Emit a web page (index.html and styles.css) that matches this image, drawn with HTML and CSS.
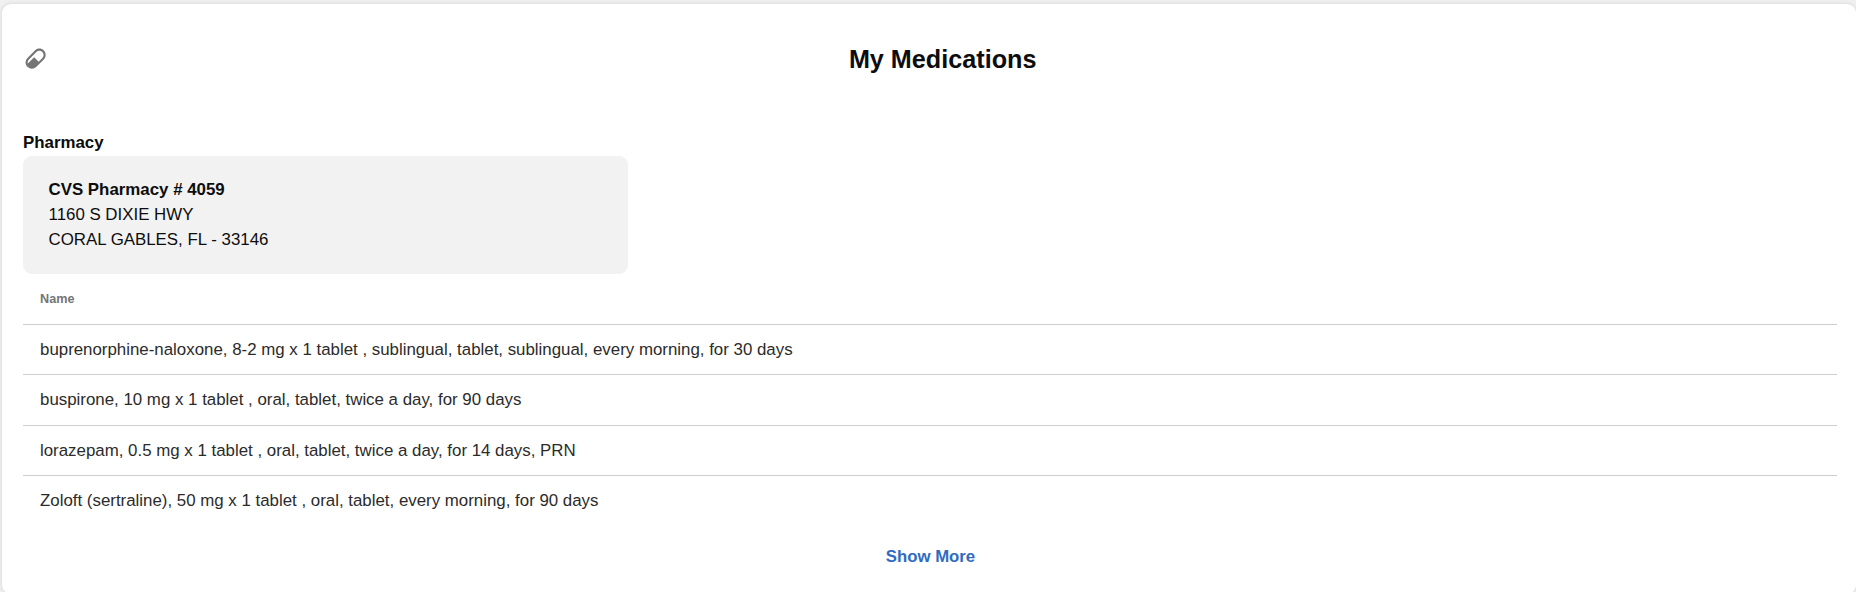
FILE: index.html
```html
<!DOCTYPE html>
<html lang="en">
<head>
<meta charset="utf-8">
<title>My Medications</title>
<link rel="stylesheet" href="styles.css">
</head>
<body>
<main class="card">
  <header class="card-header">
    <svg class="pill-icon" viewBox="0 0 24 24" aria-hidden="true">
      <path fill="#757575" d="M4.22 11.29L11.29 4.22C13.64 1.88 17.43 1.88 19.78 4.22C22.12 6.56 22.12 10.36 19.78 12.71L12.71 19.78C10.36 22.12 6.56 22.12 4.22 19.78C1.88 17.43 1.88 13.64 4.22 11.29M5.64 12.71C4.59 13.75 4.24 15.24 4.6 16.57L10.59 10.59L14.83 14.83L18.36 11.29C19.93 9.73 19.93 7.2 18.36 5.64C16.8 4.07 14.27 4.07 12.71 5.64L5.64 12.71Z"/>
    </svg>
    <h1 class="title">My Medications</h1>
  </header>
  <h2 class="section-label">Pharmacy</h2>
  <address class="pharmacy">
    <strong>CVS Pharmacy # 4059</strong>
    <span>1160 S DIXIE HWY</span>
    <span>CORAL GABLES, FL - 33146</span>
  </address>
  <div class="list-heading">Name</div>
  <ul class="list">
    <li>buprenorphine-naloxone, 8-2 mg x 1 tablet , sublingual, tablet, sublingual, every morning, for 30 days</li>
    <li>buspirone, 10 mg x 1 tablet , oral, tablet, twice a day, for 90 days</li>
    <li>lorazepam, 0.5 mg x 1 tablet , oral, tablet, twice a day, for 14 days, PRN</li>
    <li>Zoloft (sertraline), 50 mg x 1 tablet , oral, tablet, every morning, for 90 days</li>
  </ul>
  <button class="show-more" type="button">Show More</button>
</main>
</body>
</html>
```
FILE: styles.css
```css
* { box-sizing: border-box; }
body {
  margin: 0;
  height: 592px;
  overflow: hidden;
  padding: 4px 0 0 2px;
  background: #f0f0f0;
  font-family: "Liberation Sans", Arial, sans-serif;
  font-size: 16.86px;
  color: #0d0d0d;
}
.card {
  height: 590px;
  padding: 0 19px 0 21px;
  background: #fff;
  border-radius: 9px;
  box-shadow: 0 0 4px rgba(0, 0, 0, 0.12);
  display: flex;
  flex-direction: column;
}
.card-header {
  display: flex;
  align-items: center;
  height: 110px;
}
.pill-icon {
  width: 25.3px;
  height: 25.3px;
}
.title {
  flex: 1;
  margin: 0;
  font-size: 25.2px;
  font-weight: bold;
  text-align: center;
}
.section-label {
  margin: 16px 0 0;
  height: 26px;
  line-height: 25px;
  font-size: 16.86px;
}
.pharmacy {
  display: flex;
  flex-direction: column;
  width: 605px;
  height: 118px;
  padding: 20.5px 25.5px;
  border-radius: 9px;
  background: #f2f2f2;
  font-style: normal;
  line-height: 25.3px;
}
.list-heading {
  height: 49.6px;
  padding-left: 17px;
  line-height: 50px;
  font-size: 12.65px;
  font-weight: bold;
  color: #757575;
}
.list {
  margin: 0;
  padding: 0;
  list-style: none;
}
.list li {
  height: 50.6px;
  padding-left: 17px;
  border-top: 1px solid #cfcfcf;
  line-height: 50.6px;
  color: #2b2b2b;
}
.show-more {
  align-self: center;
  margin-top: 17.6px;
  padding: 0 0 0 1px;
  border: 0;
  background: none;
  font: bold 16.75px/25px "Liberation Sans", Arial, sans-serif;
  color: #2f6bc2;
}
```
